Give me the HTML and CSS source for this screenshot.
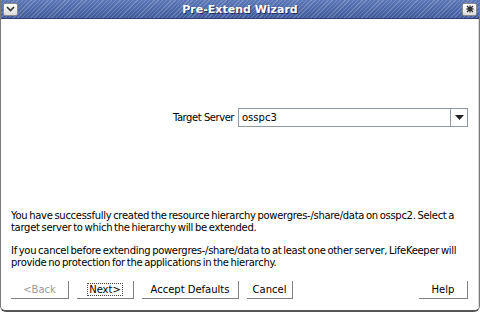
FILE: index.html
```html
<!DOCTYPE html>
<html>
<head>
<meta charset="utf-8">
<link rel="stylesheet" href="styles.css">
</head>
<body>
<div class="window">
  <div class="titlebar">
    <div class="tbtn">
      <svg width="9" height="6" viewBox="0 0 9 6"><path d="M1 1 L4.5 4.5 L8 1" fill="none" stroke="#333" stroke-width="1.6"/></svg>
    </div>
    <div class="title">Pre-Extend Wizard</div>
    <div class="tbtn">
      <svg width="8" height="8" viewBox="0 0 8 8"><path d="M1 1 L7 7 M7 1 L1 7 M4 0.5 V7.5 M0.5 4 H7.5" fill="none" stroke="#333" stroke-width="1.3"/></svg>
    </div>
  </div>
  <div class="body">
    <div class="formarea">
      <label class="lbl">Target Server</label>
      <div class="combo">
        <div class="combo-text">osspc3</div>
        <div class="combo-btn">
          <svg width="9" height="5" viewBox="0 0 9 5"><path d="M0 0 H9 L4.5 5 Z" fill="#222"/></svg>
        </div>
      </div>
    </div>
    <div class="msg">
      <p>You have successfully created the resource hierarchy powergres-/share/data on osspc2. Select a target server to which the hierarchy will be extended.</p>
      <p>If you cancel before extending powergres-/share/data to at least one other server, LifeKeeper will provide no protection for the applications in the hierarchy.</p>
    </div>
    <div class="buttons">
      <div class="btn disabled w-back">&lt;Back</div>
      <div class="btn w-next"><span class="focus">Next&gt;</span></div>
      <div class="btn w-accept">Accept Defaults</div>
      <div class="btn w-cancel">Cancel</div>
      <div class="spacer"></div>
      <div class="btn w-help">Help</div>
    </div>
  </div>
</div>
</body>
</html>
```

FILE: styles.css
```css
html, body {
  margin: 0;
  padding: 0;
  background: #ffffff;
}
body {
  width: 480px;
  height: 312px;
  overflow: hidden;
  font-family: "DejaVu Sans", sans-serif;
  font-size: 10px;
  color: #000;
}
.window {
  width: 480px;
  height: 312px;
  box-sizing: border-box;
  display: flex;
  flex-direction: column;
  border-left: 1px solid #7a7a7a;
  border-right: 1px solid #7a7a7a;
  border-bottom: 2px solid #555;
  border-radius: 0 0 6px 6px;
  overflow: hidden;
}
.titlebar {
  height: 18px;
  flex: none;
  display: flex;
  align-items: center;
  justify-content: space-between;
  padding: 0 2px;
  background-color: #4a66a8;
  background-image: repeating-linear-gradient(135deg, rgba(255,255,255,0.18) 0 1px, rgba(0,0,0,0) 1px 3px), linear-gradient(#5c78b8, #3f5b9c);
  border-bottom: 1px solid #2e4478;
}
.tbtn {
  width: 15px;
  height: 13px;
  box-sizing: border-box;
  border: 1px solid #8a8a8a;
  border-radius: 2px;
  background: linear-gradient(#ffffff, #dcdcdc);
  display: flex;
  align-items: center;
  justify-content: center;
}
.title {
  color: #ffffff;
  font-family: "DejaVu Sans", sans-serif;
  font-weight: bold;
  font-size: 11px;
  text-shadow: 1px 1px 0 #1e2e58;
}
.body {
  flex: 1;
  display: flex;
  flex-direction: column;
  padding: 0 10px 0 9px;
  background: #ffffff;
  border-right: 1px solid #d8d8d8;
}
.formarea {
  flex: 1;
  display: flex;
  align-items: center;
  justify-content: flex-end;
  gap: 4px;
  padding-top: 6px;
}
.lbl {
  letter-spacing: -0.45px;
}
.combo {
  width: 230px;
  height: 19px;
  box-sizing: border-box;
  border: 1px solid #8f99a6;
  display: flex;
}
.combo-text {
  flex: 1;
  padding-left: 3px;
  line-height: 17px;
}
.combo-btn {
  width: 16px;
  border-left: 1px solid #8f99a6;
  display: flex;
  align-items: center;
  justify-content: center;
}
.msg {
  font-size: 10px;
  letter-spacing: -0.3px;
  word-spacing: -1px;
  padding-left: 1px;
}
.msg p {
  margin: 0 0 11px 0;
  line-height: 12px;
}
.buttons {
  display: flex;
  gap: 8px;
  padding: 1px 0 11px 1px;
  height: 18px;
}
.btn {
  height: 18px;
  box-sizing: border-box;
  display: flex;
  align-items: center;
  justify-content: center;
  border-right: 1px solid #808080;
  border-bottom: 1px solid #808080;
  font-size: 10px;
}
.disabled { color: #9a9a9a; }
.focus {
  border: 1px dotted #444;
  padding: 0 1px;
  line-height: 11px;
}
.w-back { width: 58px; }
.w-next { width: 57px; }
.w-accept { width: 97px; }
.w-cancel { width: 46px; }
.w-help { width: 49px; }
.spacer { flex: 1; }
```
